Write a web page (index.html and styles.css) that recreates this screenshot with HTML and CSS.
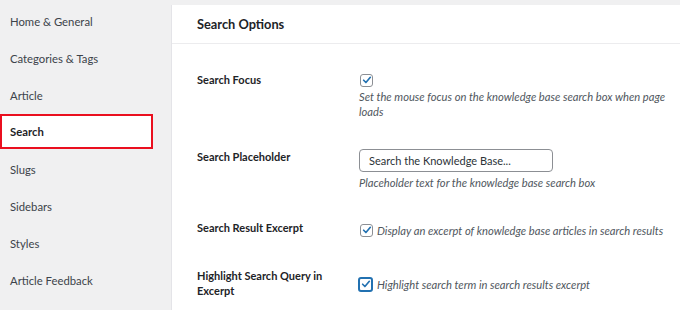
FILE: index.html
```html
<!DOCTYPE html>
<html>
<head>
<meta charset="utf-8">
<link rel="stylesheet" href="styles.css">
</head>
<body>
<div class="page">
  <nav class="sidebar">
    <div class="nav-item">Home &amp; General</div>
    <div class="nav-item">Categories &amp; Tags</div>
    <div class="nav-item">Article</div>
    <div class="nav-item active">Search</div>
    <div class="nav-item">Slugs</div>
    <div class="nav-item">Sidebars</div>
    <div class="nav-item">Styles</div>
    <div class="nav-item">Article Feedback</div>
  </nav>
  <main class="panel">
    <div class="panel-head">Search Options</div>
    <div class="rows">
      <div class="row row-focus">
        <div class="label">Search Focus</div>
        <div class="field">
          <div class="check-line">
            <span class="cb"><svg viewBox="0 0 12 12" width="10" height="10"><path d="M2 6.3 L4.7 9 L10 2.8" fill="none" stroke="#2271b1" stroke-width="2" stroke-linecap="round" stroke-linejoin="round"/></svg></span>
          </div>
          <p class="desc block">Set the mouse focus on the knowledge base search box when page loads</p>
        </div>
      </div>
      <div class="row row-ph">
        <div class="label">Search Placeholder</div>
        <div class="field">
          <div class="input">Search the Knowledge Base...</div>
          <p class="desc">Placeholder text for the knowledge base search box</p>
        </div>
      </div>
      <div class="row row-excerpt">
        <div class="label">Search Result Excerpt</div>
        <div class="field">
          <div class="check-line">
            <span class="cb"><svg viewBox="0 0 12 12" width="10" height="10"><path d="M2 6.3 L4.7 9 L10 2.8" fill="none" stroke="#2271b1" stroke-width="2" stroke-linecap="round" stroke-linejoin="round"/></svg></span>
            <span class="desc inline">Display an excerpt of knowledge base articles in search results</span>
          </div>
        </div>
      </div>
      <div class="row row-hl">
        <div class="label">Highlight Search Query in Excerpt</div>
        <div class="field">
          <div class="check-line">
            <span class="cb focused"><svg viewBox="0 0 12 12" width="10" height="10"><path d="M2 6.3 L4.7 9 L10 2.8" fill="none" stroke="#2271b1" stroke-width="2" stroke-linecap="round" stroke-linejoin="round"/></svg></span>
            <span class="desc inline">Highlight search term in search results excerpt</span>
          </div>
        </div>
      </div>
    </div>
  </main>
</div>
</body>
</html>
```
FILE: styles.css
```css
* { box-sizing: border-box; }
html, body { margin: 0; padding: 0; }
body {
  background: #f0f0f1;
  font-family: Lato, "Noto Sans", sans-serif;
  font-size: 11px;
  color: #1d2327;
  width: 680px;
  height: 310px;
  overflow: hidden;
}
.page { display: flex; height: 310px; }
.sidebar {
  width: 171px;
  flex: none;
  padding-top: 3px;
}
.nav-item {
  height: 37px;
  display: flex;
  align-items: center;
  padding-left: 10px;
  color: #3c434a;
  font-size: 11.3px;
  line-height: 16px;
}
.nav-item.active {
  width: 153px;
  height: 35px;
  margin-bottom: 2px;
  padding-left: 8px;
  background: #fff;
  border: 2px solid #ea0f1f;
  font-weight: 700;
  color: #1d2327;
}
.panel {
  flex: 1;
  margin-top: 5px;
  background: #fff;
  border-left: 1px solid #e4e4e8;
}
.panel-head {
  height: 39px;
  border-bottom: 1px solid #ececee;
  padding-left: 25px;
  display: flex;
  align-items: center;
  font-size: 12.8px;
  font-weight: 700;
  color: #1d2327;
}
.rows { padding-left: 25px; }
.row { display: flex; }
.label {
  width: 162px;
  flex: none;
  font-weight: 700;
  line-height: 15px;
  padding-right: 30px;
}
.field { flex: 1; }
.desc {
  margin: 0;
  font-style: italic;
  font-size: 11.2px;
  color: #50575e;
  line-height: 15px;
  padding-right: 8px;
}
.desc.block { margin-top: 1px; }
.check-line { display: flex; align-items: center; height: 16px; }
.cb {
  width: 13px;
  height: 13px;
  border: 1px solid #8c8f94;
  border-radius: 3px;
  display: inline-flex;
  align-items: center;
  justify-content: center;
  flex: none;
  margin-left: 1px;
  margin-right: 4px;
}
.cb.focused {
  width: 15px;
  height: 15px;
  margin-left: -1px;
  border: 2px solid #2271b1;
}
.row-focus { margin-top: 28px; }
.row-ph { margin-top: 30px; }
.input {
  width: 194px;
  height: 23px;
  border: 1px solid #8c8f94;
  border-radius: 4px;
  padding-left: 9px;
  display: flex;
  align-items: center;
  color: #2c3338;
  margin-bottom: 3px;
}
.row-excerpt { margin-top: 30px; }
.row-excerpt .field { padding-top: 2px; }
.row-hl { margin-top: 30px; }
.row-hl .field { padding-top: 8px; }
```
